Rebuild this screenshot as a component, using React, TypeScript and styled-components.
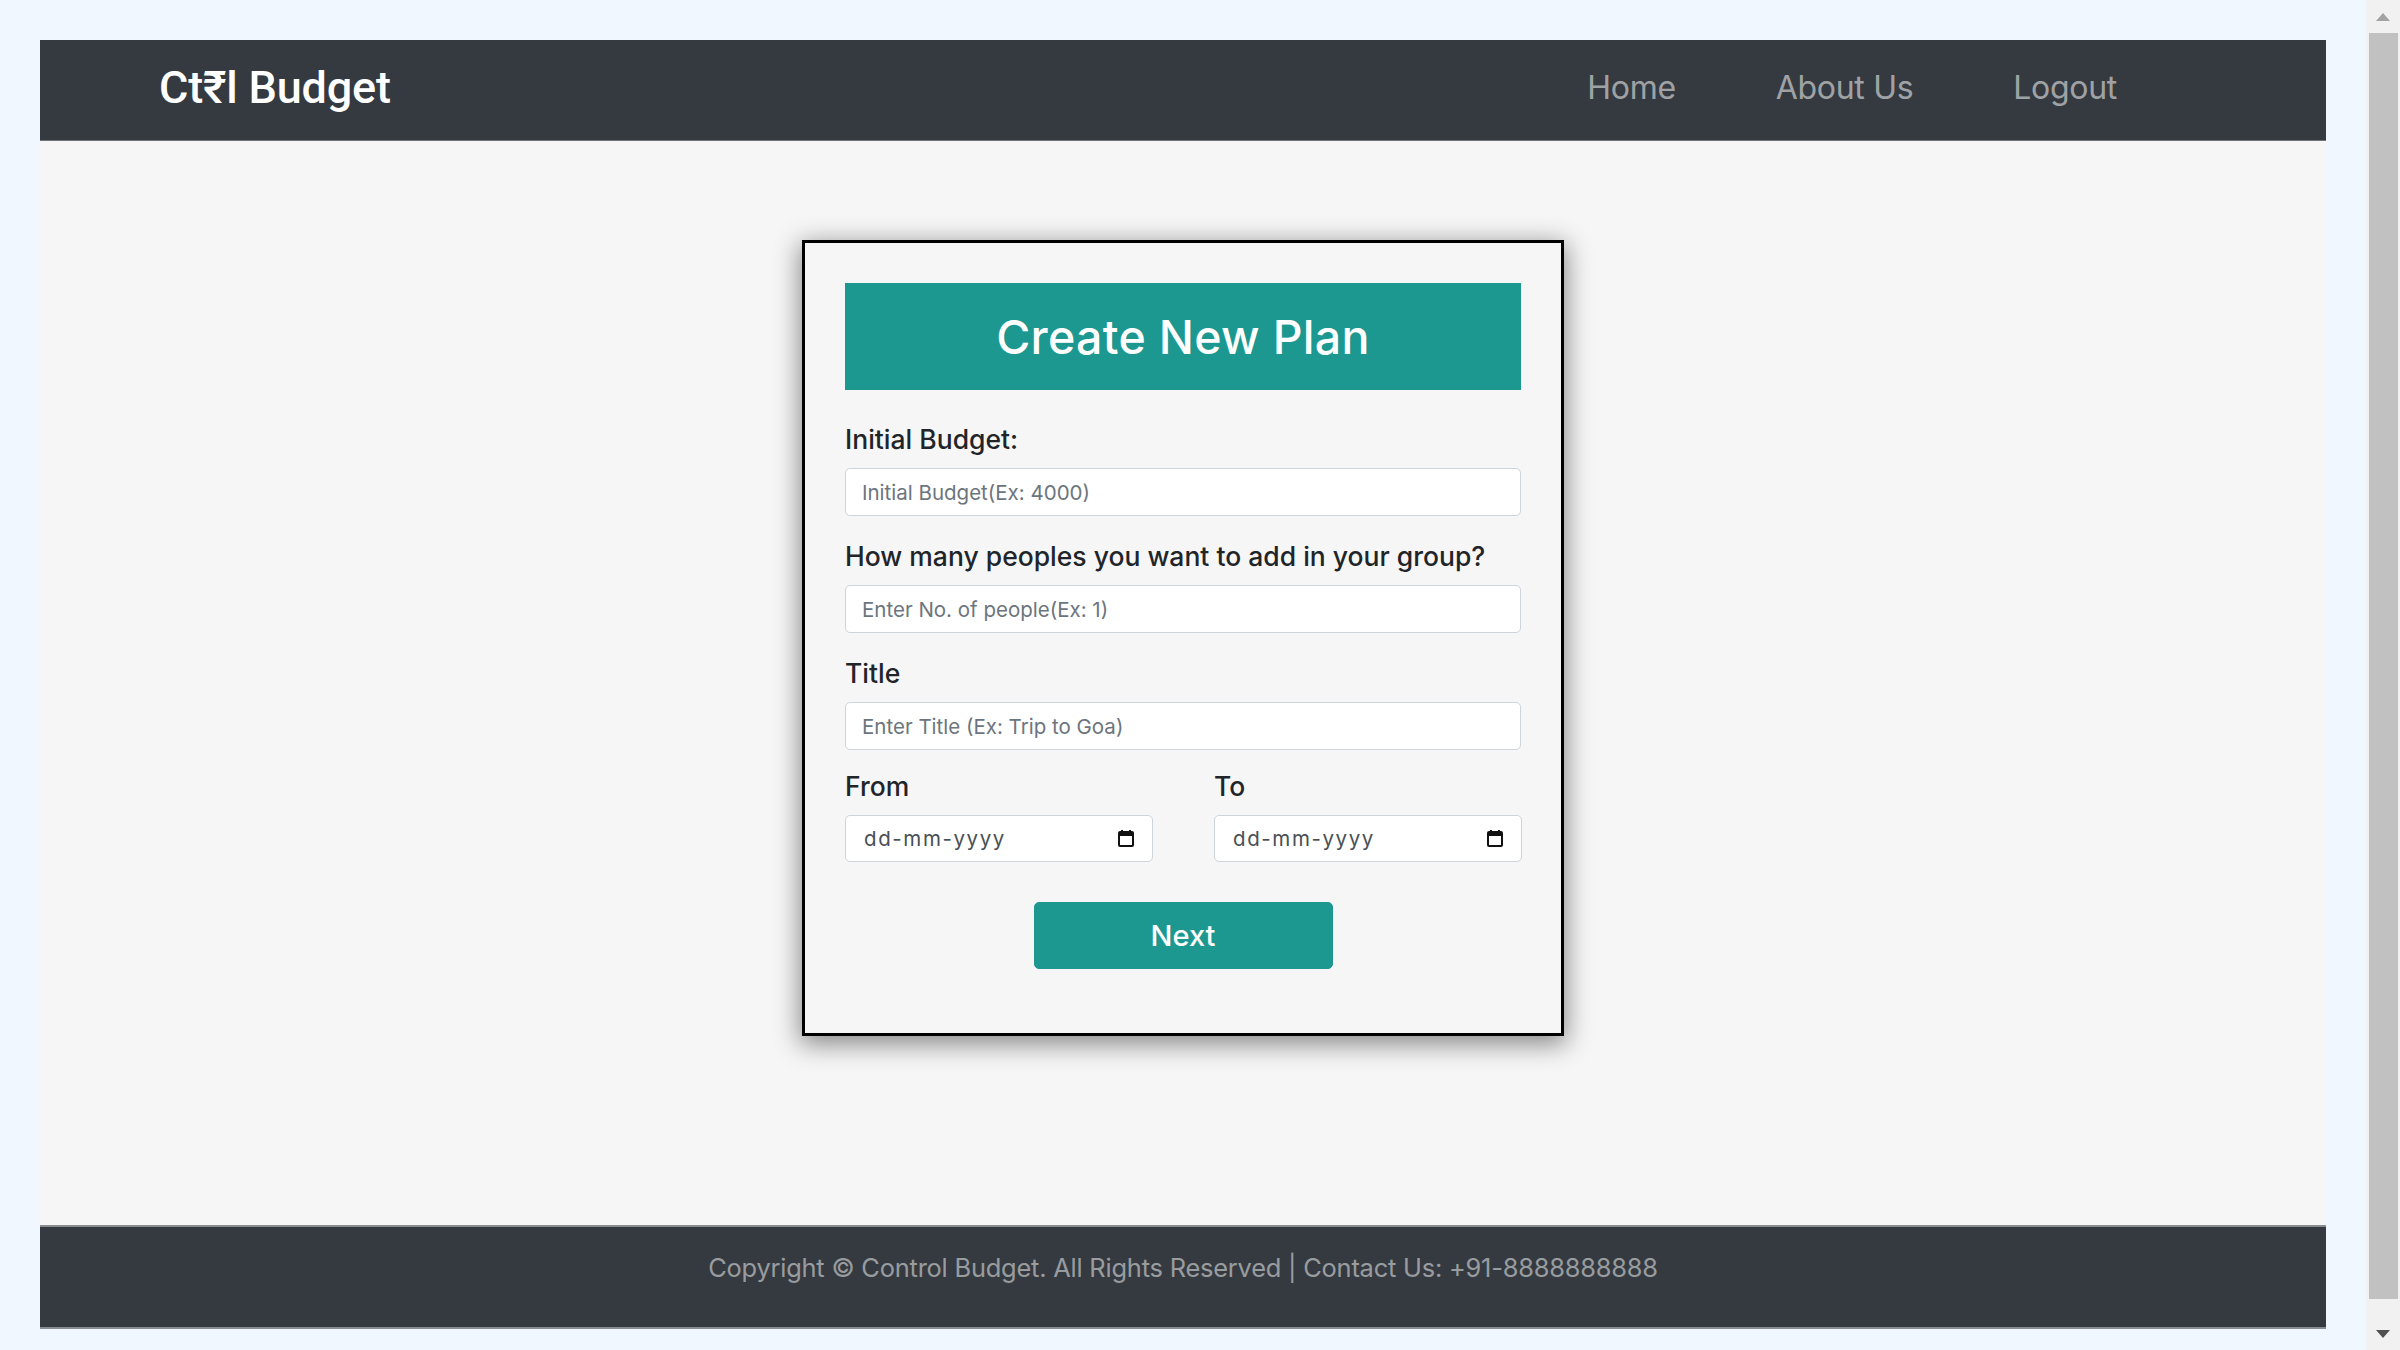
import React from "react";
import styled, { createGlobalStyle } from "styled-components";

const GlobalStyle = createGlobalStyle`
  html { background: #f0f7ff; }
  body {
    margin: 40px 74px 40px 40px;
    background: #f0f7ff;
    font-family: Inter, "Open Sans", sans-serif;
    color: #212529;
  }
  * { box-sizing: border-box; }
`;

const Page = styled.div`
  display: flex;
  flex-direction: column;
  min-height: 1289px;
`;

const Header = styled.header`
  height: 101px;
  background: #343a40;
  border-bottom: 1px solid #6c737a;
  display: flex;
  align-items: center;
  justify-content: space-between;
  padding: 0 209px 6px 119px;
`;

const Logo = styled.a`
  font-family: Roboto, "Noto Sans", sans-serif;
  font-size: 45px;
  font-weight: 500;
  color: #ffffff;
  text-decoration: none;
  letter-spacing: -0.2px;
`;

const Nav = styled.nav`
  display: flex;
  gap: 100px;
`;

const NavLink = styled.a`
  font-size: 32px;
  color: rgba(255, 255, 255, 0.55);
  text-decoration: none;
  letter-spacing: -0.3px;
`;

const Main = styled.main`
  flex: 1;
  background: #f6f6f6;
  display: flex;
  justify-content: center;
  align-items: flex-start;
  padding-top: 99px;
`;

const Card = styled.form`
  width: 762px;
  background: #f6f6f6;
  border: 3px solid #000;
  box-shadow: 0 6px 24px 2px rgba(0, 0, 0, 0.45);
  padding: 40px 40px 64px;
  display: flex;
  flex-direction: column;
`;

const TitleBar = styled.h1`
  margin: 0 0 31px;
  height: 107px;
  background: #1c9890;
  color: #fff;
  display: flex;
  align-items: center;
  justify-content: center;
  font-size: 46.5px;
  font-weight: 500;
  letter-spacing: 0.3px;
`;

const Field = styled.div<{ $gap?: number }>`
  display: flex;
  flex-direction: column;
  margin-bottom: ${(p) => (p.$gap ?? 22)}px;
`;

const Label = styled.label`
  font-size: 26.5px;
  line-height: 36px;
  font-weight: 450;
  color: #212529;
  margin-bottom: 11px;
`;

const Input = styled.input`
  width: 100%;
  height: 48px;
  background: #fff;
  border: 1px solid #ced4da;
  border-radius: 5px;
  padding: 0 16px;
  font-family: inherit;
  font-size: 20.5px;
  color: #495057;
  outline: none;
  &::placeholder { color: #6c757d; }
`;

const DateRow = styled.div`
  display: grid;
  grid-template-columns: 308px 308px;
  column-gap: 61px;
  margin-bottom: 40px;
`;

const DateBox = styled.div`
  position: relative;
  width: 308px;
`;

const DateInput = styled(Input)`
  height: 47px;
  padding-left: 18px;
  letter-spacing: 1.6px;
  &::placeholder { color: #4a4f55; }
`;

const CalIcon = styled.svg`
  position: absolute;
  right: 19px;
  top: 15px;
  width: 16px;
  height: 17px;
`;

const Button = styled.button`
  align-self: center;
  width: 299px;
  height: 67px;
  background: #1c9890;
  border: 1px solid #1c9890;
  border-radius: 5px;
  color: #fff;
  font-family: inherit;
  font-size: 29px;
  font-weight: 500;
  cursor: pointer;
`;

const Footer = styled.footer`
  height: 104px;
  background: #343a40;
  border-top: 2px solid #888c90;
  border-bottom: 2px solid #888c90;
  display: flex;
  align-items: center;
  justify-content: center;
  padding-bottom: 20px;
`;

const FooterText = styled.p`
  margin: 0;
  font-size: 25.4px;
  color: rgba(255, 255, 255, 0.5);
  letter-spacing: -0.2px;
`;

/* Drawing of the browser's vertical scrollbar, lying over the page edge */
const ScrollBar = styled.div`
  position: fixed;
  top: 0;
  right: 0;
  width: 34px;
  height: 100vh;
  background: #f1f1f1;
  display: flex;
  flex-direction: column;
`;

const ScrollButton = styled.div`
  height: 33px;
  display: flex;
  align-items: center;
  justify-content: center;
`;

const ScrollTrack = styled.div`
  flex: 1;
  padding: 0 2px 18px 3px;
  display: flex;
`;

const ScrollThumb = styled.div`
  flex: 1;
  background: #c1c1c1;
`;

function Calendar() {
  return (
    <CalIcon viewBox="0 0 16 17">
      <rect x="3" y="0" width="2" height="3" fill="#111" />
      <rect x="11" y="0" width="2" height="3" fill="#111" />
      <rect x="1" y="2" width="14" height="14" rx="1" fill="none" stroke="#111" strokeWidth="2" />
      <rect x="1" y="2" width="14" height="4" fill="#111" />
    </CalIcon>
  );
}

export default function App() {
  return (
    <>
      <GlobalStyle />
      <Page>
        <Header>
          <Logo href="#">Ct₹l Budget</Logo>
          <Nav>
            <NavLink href="#">Home</NavLink>
            <NavLink href="#">About Us</NavLink>
            <NavLink href="#">Logout</NavLink>
          </Nav>
        </Header>
        <Main>
          <Card onSubmit={(e) => e.preventDefault()}>
            <TitleBar>Create New Plan</TitleBar>
            <Field>
              <Label>Initial Budget:</Label>
              <Input placeholder="Initial Budget(Ex: 4000)" />
            </Field>
            <Field>
              <Label>How many peoples you want to add in your group?</Label>
              <Input placeholder="Enter No. of people(Ex: 1)" />
            </Field>
            <Field $gap={18}>
              <Label>Title</Label>
              <Input placeholder="Enter Title (Ex: Trip to Goa)" />
            </Field>
            <DateRow>
              <Field $gap={0}>
                <Label>From</Label>
                <DateBox>
                  <DateInput placeholder="dd-mm-yyyy" />
                  <Calendar />
                </DateBox>
              </Field>
              <Field $gap={0}>
                <Label>To</Label>
                <DateBox>
                  <DateInput placeholder="dd-mm-yyyy" />
                  <Calendar />
                </DateBox>
              </Field>
            </DateRow>
            <Button type="submit">Next</Button>
          </Card>
        </Main>
        <Footer>
          <FooterText>
            Copyright © Control Budget. All Rights Reserved | Contact Us: +91-8888888888
          </FooterText>
        </Footer>
      </Page>
      <ScrollBar aria-hidden="true">
        <ScrollButton>
          <svg width="14" height="8" viewBox="0 0 14 8">
            <polygon points="0,8 7,0 14,8" fill="#a3a3a3" />
          </svg>
        </ScrollButton>
        <ScrollTrack>
          <ScrollThumb />
        </ScrollTrack>
        <ScrollButton>
          <svg width="14" height="8" viewBox="0 0 14 8">
            <polygon points="0,0 14,0 7,8" fill="#505050" />
          </svg>
        </ScrollButton>
      </ScrollBar>
    </>
  );
}
